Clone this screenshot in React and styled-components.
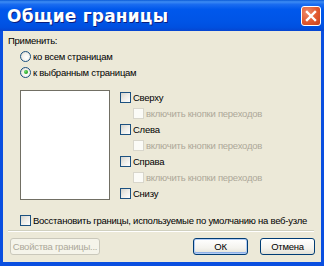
import React from 'react';
import styled, { createGlobalStyle } from 'styled-components';

const GlobalStyle = createGlobalStyle`
    html, body {
        margin: 0;
        padding: 0;
        background: #ece9d8;
    }
`;

function App() {
    return (
        <>
            <GlobalStyle />
            <Window>
                <TitleBar>
                    <Title>Общие границы</Title>
                    <CloseButton aria-label='Закрыть'>
                        <svg width='12' height='12' viewBox='0 0 12 12'>
                            <path d='M2 2 L10 10 M10 2 L2 10' stroke='#fff' strokeWidth='2.4' strokeLinecap='square' />
                        </svg>
                    </CloseButton>
                </TitleBar>
                <Client>
                    <Label>Применить:</Label>
                    <RadioGroup>
                        <Option>
                            <Radio />
                            <span>ко всем страницам</span>
                        </Option>
                        <Option>
                            <Radio checked />
                            <span>к выбранным страницам</span>
                        </Option>
                    </RadioGroup>
                    <Main>
                        <Preview />
                        <CheckList>
                            <Option><CheckBox /><span>Сверху</span></Option>
                            <Option sub disabled><CheckBox disabled /><span>включить кнопки переходов</span></Option>
                            <Option><CheckBox /><span>Слева</span></Option>
                            <Option sub disabled><CheckBox disabled /><span>включить кнопки переходов</span></Option>
                            <Option><CheckBox /><span>Справа</span></Option>
                            <Option sub disabled><CheckBox disabled /><span>включить кнопки переходов</span></Option>
                            <Option><CheckBox /><span>Снизу</span></Option>
                        </CheckList>
                    </Main>
                    <RestoreRow>
                        <CheckBox />
                        <span>Восстановить границы, используемые по умолчанию на веб-узле</span>
                    </RestoreRow>
                    <Separator />
                    <ButtonRow>
                        <Button disabled width={90}>Свойства границы...</Button>
                        <Spacer />
                        <Button primary width={55}>ОК</Button>
                        <Button width={55}>Отмена</Button>
                    </ButtonRow>
                </Client>
            </Window>
        </>
    );
}

const Window = styled.div`
    width: 324px;
    height: 266px;
    box-sizing: border-box;
    display: flex;
    flex-direction: column;
    background: #0a4fe0;
    font-family: 'Liberation Sans', Arial, sans-serif;
    font-size: 9.5px;
    letter-spacing: -0.25px;
    color: #000;
`;

const TitleBar = styled.div`
    height: 31px;
    flex-shrink: 0;
    display: flex;
    align-items: center;
    padding: 0 3px 0 7px;
    background: linear-gradient(
        to bottom,
        #0a5ad6 0%,
        #3d8cf4 6%,
        #1a6cf0 14%,
        #0058ec 30%,
        #0054e6 70%,
        #0050e0 88%,
        #0645d0 100%
    );
`;

const Title = styled.div`
    flex: 1;
    color: #fff;
    font-family: 'DejaVu Sans', Verdana, sans-serif;
    font-weight: bold;
    font-size: 17px;
    letter-spacing: 0.2px;
    text-shadow: 1px 1px 0 #0a1e80;
    padding-top: 1px;
`;

const CloseButton = styled.div`
    width: 20px;
    height: 20px;
    box-sizing: border-box;
    border: 1px solid #fff;
    border-radius: 3px;
    background: radial-gradient(circle at 30% 30%, #ec8a6a 0%, #e2592f 55%, #c8401c 100%);
    display: flex;
    align-items: center;
    justify-content: center;
    margin-top: 1px;
`;

const Client = styled.div`
    flex: 1;
    margin: 0 3px 4px 3px;
    background: #ece9d8;
    display: flex;
    flex-direction: column;
    padding: 4px 7px 0 5px;
`;

const Label = styled.div`
    line-height: 12px;
    height: 12px;
`;

const RadioGroup = styled.div`
    display: flex;
    flex-direction: column;
    margin: 1px 0 0 12px;
`;

const Option = styled.label`
    display: flex;
    align-items: center;
    gap: 2px;
    height: 16px;
    white-space: nowrap;
    padding-left: ${(p) => (p.sub ? '13px' : '0')};
    color: ${(p) => (p.disabled ? '#aca899' : '#000')};
`;

const Radio = styled.span`
    width: 11px;
    height: 11px;
    box-sizing: border-box;
    border-radius: 50%;
    border: 1px solid #1c5180;
    background: radial-gradient(circle at 60% 60%, #ffffff 0%, #f2f1ec 50%, #cfcdc4 100%);
    position: relative;
    flex-shrink: 0;

    &::after {
        content: '';
        display: ${(p) => (p.checked ? 'block' : 'none')};
        position: absolute;
        left: 2.5px;
        top: 2.5px;
        width: 4px;
        height: 4px;
        border-radius: 50%;
        background: radial-gradient(circle at 35% 35%, #6fe06f 0%, #21a121 70%);
    }
`;

const CheckBox = styled.span`
    width: 11px;
    height: 11px;
    box-sizing: border-box;
    flex-shrink: 0;
    border: 1px solid ${(p) => (p.disabled ? '#d8d6cb' : '#1c5180')};
    background: ${(p) =>
        p.disabled
            ? '#fbfbf7'
            : 'linear-gradient(135deg, #d4d3cc 0%, #ecebe6 45%, #ffffff 100%)'};
`;

const Main = styled.div`
    display: grid;
    grid-template-columns: 90px auto;
    column-gap: 10px;
    margin: 9px 0 0 12px;
`;

const Preview = styled.div`
    height: 110px;
    margin-top: 1px;
    box-sizing: border-box;
    background: #fff;
    border: 1px solid #716f64;
`;

const CheckList = styled.div`
    display: flex;
    flex-direction: column;
`;

const RestoreRow = styled(Option)`
    margin: 11px 0 0 12px;
`;

const Separator = styled.div`
    height: 0;
    border-top: 1px solid #d0d0bf;
    border-bottom: 1px solid #ffffff;
    margin-top: 2px;
`;

const ButtonRow = styled.div`
    display: flex;
    align-items: center;
    gap: 12px;
    margin: 6px -1px 0 2px;
`;

const Spacer = styled.div`
    flex: 1;
`;

const Button = styled.div`
    width: ${(p) => p.width}px;
    flex-shrink: 0;
    height: 17px;
    box-sizing: border-box;
    display: flex;
    align-items: center;
    justify-content: center;
    border-radius: 3px;
    white-space: nowrap;
    border: 1px solid ${(p) => (p.disabled ? '#cac8bb' : '#003c74')};
    color: ${(p) => (p.disabled ? '#aca899' : '#000')};
    background: ${(p) =>
        p.disabled
            ? '#f5f4ea'
            : 'linear-gradient(to bottom, #ffffff 0%, #f4f3ee 60%, #e3e1d6 100%)'};
    box-shadow: ${(p) =>
        p.primary ? 'inset 0 0 0 1px #b3cdf5, inset 0 -1px 0 1px #8fb1e8' : 'none'};
`;

export default App;
